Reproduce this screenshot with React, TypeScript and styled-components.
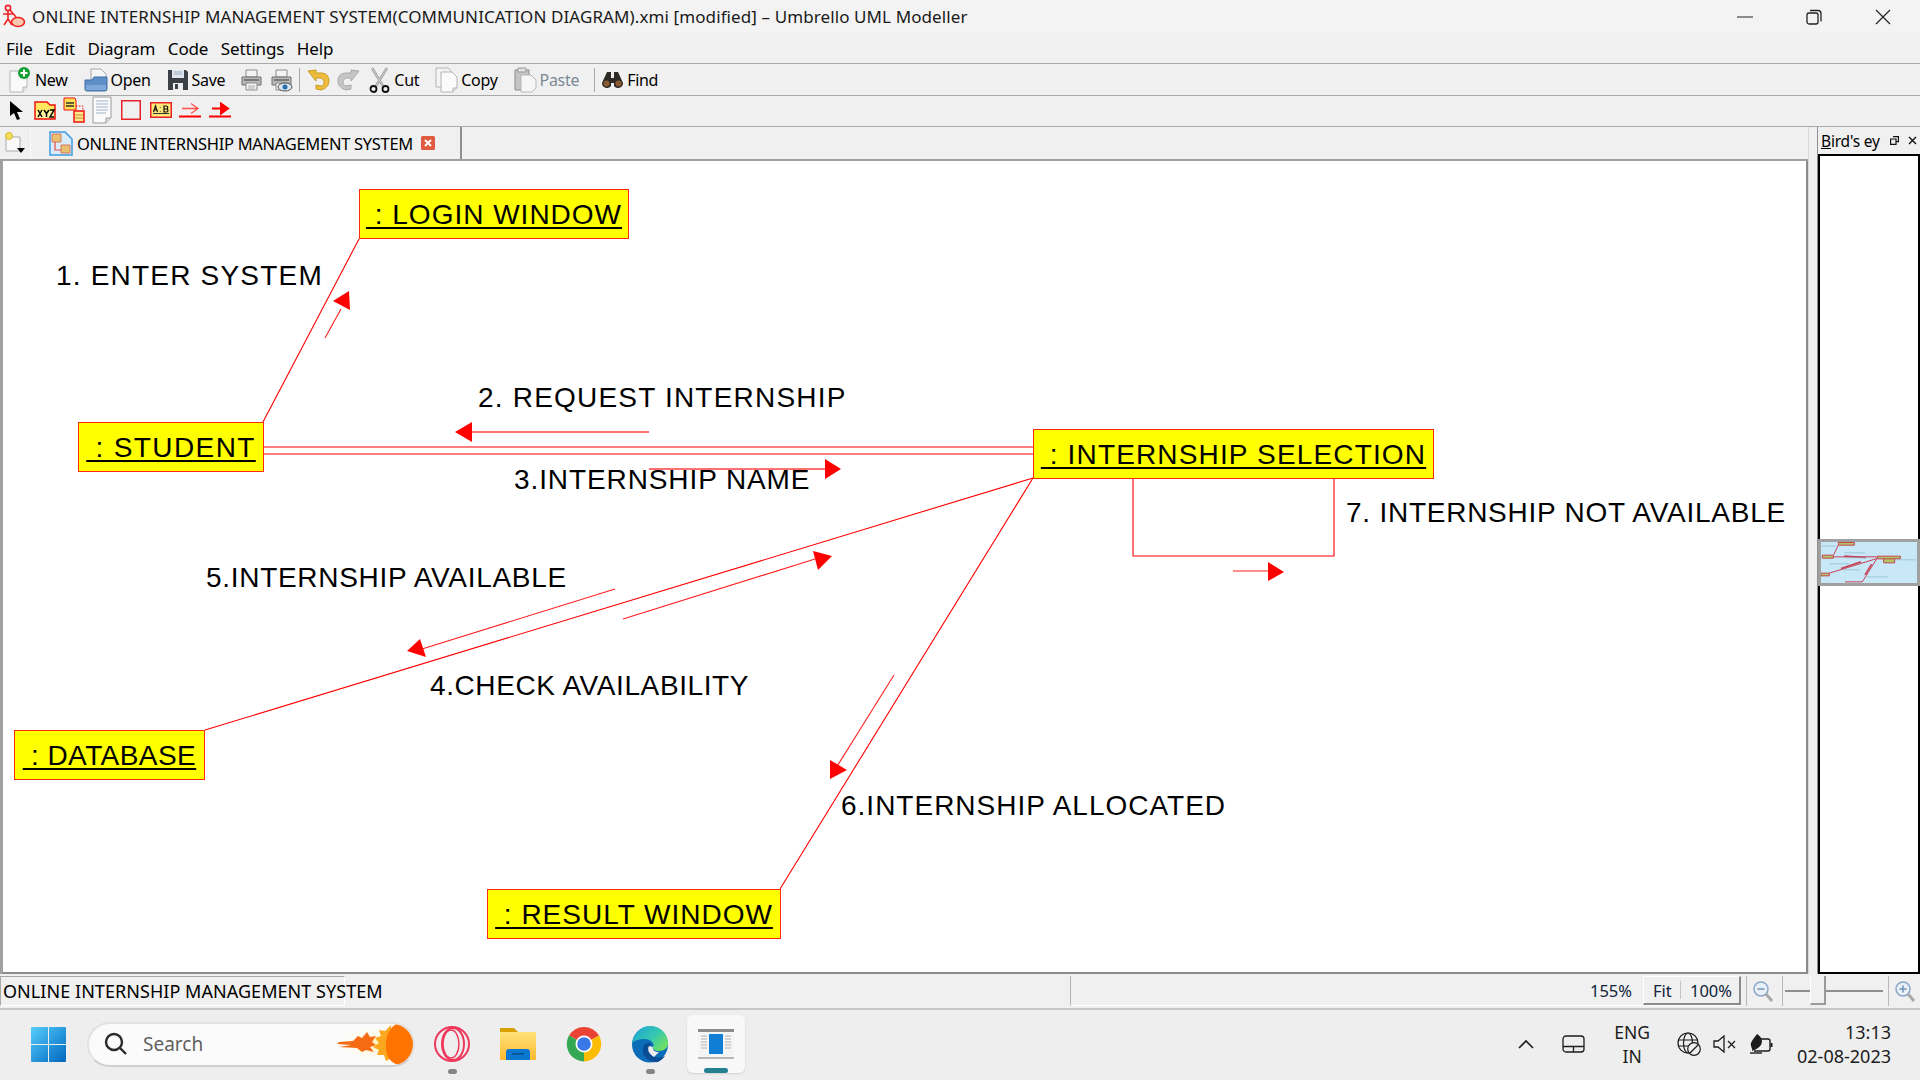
import React from 'react';
import styled, { createGlobalStyle } from 'styled-components';

const GlobalStyle = createGlobalStyle`
  html, body { margin: 0; padding: 0; background: #f0f0f0; }
  body { font-family: "Noto Sans", "Open Sans", sans-serif; color: #000; overflow: hidden; }
`;

const Page = styled.div`
  width: 1920px;
  height: 1080px;
  display: flex;
  flex-direction: column;
  overflow: hidden;
`;

const TitleBar = styled.div`
  height: 33px;
  display: flex;
  align-items: center;
  background: #f3f3f3;
  padding-left: 2px;
`;

const TitleText = styled.span`
  margin-left: 6px;
  font-size: 17px;
  letter-spacing: 0.1px;
  color: #1a1a1a;
  white-space: nowrap;
`;

const WindowControls = styled.div`
  margin-left: auto;
  display: flex;
  padding-right: 3px;
`;

const WindowButton = styled.div`
  width: 69px;
  height: 33px;
  display: flex;
  align-items: center;
  justify-content: center;
`;

const MenuBar = styled.div`
  height: 30px;
  display: flex;
  align-items: center;
  gap: 12.5px;
  padding-left: 6px;
  background: #f0f0f0;
  border-bottom: 1px solid #a9a9a9;
  font-size: 17px;
  letter-spacing: -0.15px;
`;

const ToolRow = styled.div`
  height: 31px;
  display: flex;
  align-items: center;
  background: #f0f0f0;
  border-bottom: 1px solid #a9a9a9;
  font-size: 16px;
  letter-spacing: -0.3px;
`;

const ToolButton = styled.div<{ $disabled?: boolean; $tight?: boolean }>`
  display: flex;
  align-items: center;
  gap: 3px;
  padding: 0 8px 0 ${p => (p.$tight ? 5 : 8)}px;
  color: ${p => (p.$disabled ? '#7d8a96' : '#000')};
`;

const IconButton = styled.div<{ $left?: number; $right?: number }>`
  display: flex;
  align-items: center;
  padding: 0 ${p => p.$right ?? 3.5}px 0 ${p => p.$left ?? 3.5}px;
`;

const ToolSeparator = styled.div<{ $left: number; $right: number }>`
  width: 1px;
  height: 24px;
  margin: 0 ${p => p.$right}px 0 ${p => p.$left}px;
  background: #a9a9a9;
`;

const PaletteRow = styled.div`
  height: 31px;
  box-sizing: border-box;
  display: flex;
  align-items: center;
  gap: 7px;
  padding: 0 0 2px 9px;
  background: #f0f0f0;
  border-bottom: 1px solid #a9a9a9;
`;

const Workspace = styled.div`
  height: 847px;
  display: flex;
`;

const MainColumn = styled.div`
  width: 1808px;
  flex-shrink: 0;
  display: flex;
  flex-direction: column;
`;

const TabRow = styled.div`
  height: 32px;
  display: flex;
  align-items: stretch;
  background: #f0f0f0;
`;

const CornerButton = styled.div`
  width: 31px;
  display: flex;
  align-items: center;
  justify-content: center;
  border-right: 1px solid #fafafa;
  box-sizing: border-box;
`;

const Tab = styled.div`
  width: 431px;
  box-sizing: border-box;
  display: flex;
  align-items: center;
  padding-left: 18px;
  border-right: 2px solid #8f8f8f;
  font-size: 16.5px;
  letter-spacing: -0.3px;
  white-space: nowrap;
`;

const TabLabel = styled.span`
  margin: 0 8px 0 4px;
`;

const Canvas = styled.div`
  position: relative;
  flex: 1;
  background: #fff;
  overflow: hidden;
  box-shadow: inset 3px 2px 0 #a0a0a0, inset -2px -2px 0 #8a8a8a;
`;

const DiagramSvg = styled.svg`
  position: absolute;
  left: 0;
  top: 0;
`;

const ObjectBox = styled.div<{ $x: number; $y: number; $w: number; $spacing: number }>`
  position: absolute;
  left: ${p => p.$x}px;
  top: ${p => p.$y - 160}px;
  width: ${p => p.$w}px;
  height: 50px;
  box-sizing: border-box;
  display: flex;
  align-items: center;
  justify-content: center;
  padding-top: 1px;
  background: #ffff00;
  border: 1px solid #ff2a10;
  font-family: "Liberation Sans", Arial, sans-serif;
  font-size: 28px;
  letter-spacing: ${p => p.$spacing}px;
  color: #000;
  text-decoration: underline;
  text-decoration-thickness: 2px;
  text-underline-offset: 3px;
  white-space: pre;
`;

const MessageLabel = styled.div<{ $x: number; $y: number; $spacing: number }>`
  position: absolute;
  left: ${p => p.$x}px;
  top: ${p => p.$y - 160}px;
  font-family: "Liberation Sans", Arial, sans-serif;
  font-size: 28px;
  line-height: 32px;
  letter-spacing: ${p => p.$spacing}px;
  color: #000;
  white-space: pre;
`;

const Dock = styled.div`
  flex: 1;
  min-width: 0;
  display: flex;
  flex-direction: column;
  padding-left: 9px;
  box-sizing: border-box;
  background: #f0f0f0;
  border-left: 1px solid #d8d8d8;
  box-shadow: inset 8px 0 0 #f0f0f0, inset 9px 0 0 #8f8f8f;
`;

const DockHeader = styled.div`
  height: 27px;
  display: flex;
  align-items: center;
  padding-left: 3px;
  font-size: 15.5px;
  letter-spacing: -0.2px;
`;

const DockTitle = styled.span`
  width: 69px;
  white-space: nowrap;
`;

const Accel = styled.span`
  text-decoration: underline;
`;

const DockIcons = styled.div`
  display: flex;
  align-items: center;
  gap: 9px;
`;

const DockBody = styled.div`
  flex: 1;
  background: #fff;
  border: 2px solid #000;
  padding-top: 383px;
`;

const MiniMap = styled.div`
  height: 47px;
  box-sizing: border-box;
  margin: 0 -2px;
  background: #c8e8f8;
  border: 3px solid #a0a0a0;
`;

const StatusBar = styled.div`
  height: 36px;
  box-sizing: border-box;
  display: flex;
  align-items: center;
  padding: 2px 0;
  background: #f0f0f0;
  border-bottom: 2px solid #c6c6c6;
  font-size: 16.5px;
`;

const StatusMessage = styled.div`
  width: 345px;
  height: 100%;
  box-sizing: border-box;
  display: flex;
  align-items: center;
  padding-left: 2px;
  border: 1px solid #fff;
  border-top-color: #a8a8a8;
  border-left-color: #a8a8a8;
  font-size: 18px;
  letter-spacing: 0.05px;
  white-space: nowrap;
`;

const StatusFill = styled.div`
  margin-left: 725px;
  width: 671px;
  height: 100%;
  box-sizing: border-box;
  display: flex;
  align-items: center;
  justify-content: flex-end;
  border-left: 1px solid #b0b0b0;
  border-bottom: 1px solid #fff;
  color: #10233a;
`;

const FitGroup = styled.div`
  height: 100%;
  width: 98px;
  box-sizing: border-box;
  display: flex;
  align-items: center;
  justify-content: space-between;
  padding: 0 7px 0 9px;
  border-right: 2px solid #8a8a8a;
  border-bottom: 2px solid #8a8a8a;
  border-left: 1px solid #fff;
  border-top: 1px solid #fff;
  background: #f0f0f0;
`;

const FitDivider = styled.span`
  width: 1px;
  height: 18px;
  background: #c4c4c4;
`;

const FitSlot = styled.div`
  height: 100%;
  margin-left: 11px;
`;

const ZoomTile = styled.div<{ $gap: number; $w: number }>`
  width: ${p => p.$w}px;
  margin-left: ${p => p.$gap}px;
  height: 100%;
  box-sizing: border-box;
  display: flex;
  align-items: center;
  justify-content: center;
  border-left: 1px solid #b8b8b8;
`;

const SliderTrack = styled.div`
  position: relative;
  width: 98px;
  height: 2px;
  background: #8f8f8f;
`;

const SliderHandle = styled.div`
  position: absolute;
  left: 25px;
  top: -14px;
  width: 16px;
  height: 29px;
  box-sizing: border-box;
  background: #f0f0f0;
  border-left: 1px solid #fff;
  border-right: 2px solid #9a9a9a;
  border-bottom: 2px solid #9a9a9a;
`;

const Taskbar = styled.div`
  flex: 1;
  display: flex;
  align-items: center;
  padding: 0 29px 2px 31px;
  background: #eeeeee;
`;

const SearchPill = styled.div`
  position: relative;
  width: 328px;
  height: 45px;
  margin-left: 21px;
  box-sizing: border-box;
  display: flex;
  align-items: center;
  gap: 16px;
  padding-left: 15px;
  background: #fbfbfb;
  border: 2px solid #e2e2e2;
  border-bottom-color: #cfcfcf;
  border-radius: 23px;
  overflow: hidden;
  font-size: 19px;
  color: #5f5f5f;
`;

const Fireball = styled.svg`
  position: absolute;
  right: 0;
  top: -2px;
`;

const TaskIcon = styled.div<{ $gap: number }>`
  position: relative;
  width: 36px;
  height: 36px;
  margin-left: ${p => p.$gap}px;
  display: flex;
  align-items: center;
  justify-content: center;
`;

const RunningDot = styled.div`
  position: absolute;
  left: 14px;
  top: 43px;
  width: 9px;
  height: 5px;
  border-radius: 3px;
  background: #858585;
`;

const ActiveTile = styled.div`
  position: relative;
  width: 58px;
  height: 58px;
  margin-left: 19px;
  display: flex;
  align-items: center;
  justify-content: center;
  background: #f8f8f8;
  border-radius: 6px;
  box-shadow: 0 1px 2px rgba(0, 0, 0, 0.12);
`;

const ActiveBar = styled.div`
  position: absolute;
  left: 17px;
  bottom: 0;
  width: 24px;
  height: 5px;
  border-radius: 3px;
  background: #23808f;
`;

const Tray = styled.div`
  margin-left: auto;
  display: flex;
  align-items: center;
  color: #1c1c1c;
`;

const TrayIcon = styled.div<{ $gap: number }>`
  display: flex;
  margin-left: ${p => p.$gap}px;
`;

const TrayText = styled.div<{ $gap: number; $align: string; $size: number }>`
  margin-left: ${p => p.$gap}px;
  font-size: ${p => p.$size}px;
  line-height: 24px;
  text-align: ${p => p.$align};
  white-space: nowrap;
`;

/* ---------- diagram data, page coordinates ---------- */

const objects = [
  { name: ' : LOGIN WINDOW', x: 359, y: 190, w: 270, spacing: 1 },
  { name: ' : STUDENT', x: 78, y: 423, w: 186, spacing: 1.4 },
  { name: ' : INTERNSHIP SELECTION', x: 1033, y: 430, w: 401, spacing: 1.15 },
  { name: ' : DATABASE', x: 14, y: 731, w: 191, spacing: 0.45 },
  { name: ' : RESULT WINDOW', x: 487, y: 890, w: 294, spacing: 1 },
];

const messages = [
  { text: '1. ENTER SYSTEM', x: 56, y: 261, spacing: 1.2 },
  { text: '2. REQUEST INTERNSHIP', x: 478, y: 383, spacing: 1.2 },
  { text: '3.INTERNSHIP NAME', x: 514, y: 465, spacing: 0.9 },
  { text: '5.INTERNSHIP AVAILABLE', x: 206, y: 563, spacing: 0.7 },
  { text: '4.CHECK AVAILABILITY', x: 430, y: 671, spacing: 0.6 },
  { text: '6.INTERNSHIP ALLOCATED', x: 841, y: 791, spacing: 1 },
  { text: '7. INTERNSHIP NOT AVAILABLE', x: 1346, y: 498, spacing: 0.75 },
];

const links = [
  '359,240 263,423',
  '263,448 1033,448',
  '263,455 1033,455',
  '205,731 1033,479',
  '780,890 1033,479',
  '1133,479 1133,557 1334,557 1334,479',
];

const flows = [
  { line: '325,339 341,310', head: '349,292 333,302 350,311' },
  { line: '649,433 470,433', head: '455,433 472,423 472,443', wide: true },
  { line: '649,470 826,470', head: '825,460 825,480 841,470', wide: true },
  { line: '615,590 422,650', head: '407,652 420,640 426,658' },
  { line: '623,620 815,560', head: '813,552 832,557 818,571' },
  { line: '894,676 836,769', head: '830,761 830,780 847,771' },
  { line: '1233,572 1269,572', head: '1268,563 1268,582 1284,573' },
];

/* ---------- small drawings ---------- */

const AppLogo = () => (
  <svg width="24" height="26" viewBox="0 0 24 26" fill="none" stroke="#e22" strokeWidth="1.6">
    <circle cx="6" cy="4" r="2.6" />
    <path d="M6 7v8M1 10h10M6 15l-4 6M6 15l4 6M8 6l6 7" />
    <ellipse cx="16" cy="18" rx="6.5" ry="4.5" fill="#fbc8b0" />
  </svg>
);

const PageIcon = ({ plus }: { plus?: boolean }) => (
  <svg width="24" height="26" viewBox="0 0 24 26">
    <path d="M2 4h12l5 5v11l-4 5H2z" fill="#fafafa" stroke="#b4b4b4" />
    <path d="M15 25v-5h4" fill="#e6e6e6" stroke="#b4b4b4" />
    {plus && <circle cx="16" cy="6" r="6" fill="#12a030" />}
    {plus && <path d="M16 2.5v7M12.500 6h7" stroke="#fff" strokeWidth="2" />}
  </svg>
);

const OpenIcon = () => (
  <svg width="24" height="26" viewBox="0 0 24 26">
    <path d="M7 2h10l5 5v9H7z" fill="#f6f6f6" stroke="#a8a8a8" />
    <path d="M1 13h7l2-3h13v12a2 2 0 0 1-2 2H2.500a2 2 0 0 1-1.500-2z" fill="#5e8fc8" stroke="#3f6ea6" />
    <path d="M2 18h20v5H2z" fill="#7fa8d8" />
  </svg>
);

const SaveIcon = () => (
  <svg width="22" height="24" viewBox="0 0 22 24">
    <path d="M1 2h18l2 2v18H1z" fill="#3b4046" />
    <path d="M5 2h12v8H5z" fill="#dfe6ee" />
    <path d="M7 4h8M7 6h8" stroke="#9fb0c2" />
    <path d="M6 15h10v7H6z" fill="#eceef0" />
    <path d="M8 16h3v5H8z" fill="#3b4046" />
  </svg>
);

const PrintIcon = ({ eye }: { eye?: boolean }) => (
  <svg width="23" height="24" viewBox="0 0 23 24">
    <path d="M6 2h11v7H6z" fill="#f4f4f4" stroke="#8a8a8a" />
    <path d="M2 9h19v8H2z" fill="#b8b8b8" stroke="#707070" />
    <path d="M4 12h15" stroke="#666" strokeWidth="1.500" />
    <path d="M6 15h11v7H6z" fill="#f4f4f4" stroke="#8a8a8a" />
    <path d="M8 18h7M8 20h7" stroke="#aaa" />
    {eye && <ellipse cx="15" cy="19" rx="7" ry="4" fill="#d8e8f4" stroke="#555" />}
    {eye && <circle cx="15" cy="19" r="2.500" fill="#2a6ea8" />}
  </svg>
);

const ArrowBackIcon = ({ mirrored, fill, edge }: { mirrored?: boolean; fill: string; edge: string }) => (
  <svg width="23" height="22" viewBox="0 0 23 22">
    <g transform={mirrored ? 'translate(23 0) scale(-1 1)' : undefined}>
      <path d="M1 2l8-1v3h5c5 0 8 3 8 8 0 5-4 8-8 9l-5-1v-4l5 1c2 0 3-2 3-4s-2-4-4-4H9v3z" fill={fill} stroke={edge} />
    </g>
  </svg>
);

const ScissorsIcon = () => (
  <svg width="23" height="26" viewBox="0 0 23 26" fill="none">
    <path d="M4 1l11 18M19 1L8 19" stroke="#9a9a9a" strokeWidth="2.400" />
    <path d="M4 1l11 18M19 1L8 19" stroke="#e4e4e4" strokeWidth="0.800" />
    <circle cx="5.500" cy="22" r="3" stroke="#111" strokeWidth="1.800" />
    <circle cx="17.500" cy="22" r="3" stroke="#111" strokeWidth="1.800" />
  </svg>
);

const CopyIcon = () => (
  <svg width="23" height="26" viewBox="0 0 23 26">
    <path d="M1 1h12l3 3v16H1z" fill="#f4f4f4" stroke="#b4b4b4" />
    <path d="M6 5h11l5 5v11l-4 4H6z" fill="#fbfbfb" stroke="#b4b4b4" />
    <path d="M18 25v-4h4" fill="#e4e4e4" stroke="#b4b4b4" />
  </svg>
);

const PasteIcon = () => (
  <svg width="23" height="26" viewBox="0 0 23 26">
    <path d="M1 3h14v20H1z" fill="#c4c4c4" stroke="#8c8c8c" />
    <path d="M4 1h8v4H4z" fill="#e2e2e2" stroke="#9a9a9a" />
    <path d="M7 8h10l5 5v8l-4 4H7z" fill="#f6f6f6" stroke="#b8b8b8" />
  </svg>
);

const BinocularsIcon = () => (
  <svg width="23" height="18" viewBox="0 0 23 18">
    <path d="M6 1h4v6h3V1h4l5 11a5 5 0 0 1-9 3v-3h-3v3a5 5 0 0 1-9-3z" fill="#2e2a26" />
    <circle cx="5.500" cy="12.500" r="3" fill="#8a5a30" />
    <circle cx="17.500" cy="12.500" r="3" fill="#8a5a30" />
  </svg>
);

const PointerIcon = () => (
  <svg width="18" height="22" viewBox="0 0 18 22">
    <path d="M1 2v15l4-3 3 7 3-1-3-7h6z" fill="#000" />
  </svg>
);

const XyzIcon = () => (
  <svg width="22" height="22" viewBox="0 0 22 22">
    <path d="M1 3h12l3 3h5v14H1z" fill="#ffe860" stroke="#e11" strokeWidth="1.500" />
    <path d="M2 12h18v7H2z" fill="#fff6a0" />
    <path d="M4 11l4 7M8 11l-4 7M10 11l2.500 3.500v3.500M15 11l-2.500 3.500M16 11h4l-4 7h4" stroke="#000" strokeWidth="1.500" fill="none" />
  </svg>
);

const AssocIcon = () => (
  <svg width="22" height="26" viewBox="0 0 22 26">
    <path d="M1 1h11l1 3v9H1z" fill="#ffe050" stroke="#e11" />
    <path d="M3 6h8M3 9h8" stroke="#333" strokeWidth="1.500" />
    <path d="M13 9h7v6" fill="none" stroke="#e11" strokeDasharray="1.500 1.500" />
    <path d="M11 14h10v11H11z" fill="#ffe888" stroke="#e11" strokeWidth="1.500" />
    <path d="M12 18h8M12 21h8" stroke="#c84" />
  </svg>
);

const NoteIcon = () => (
  <svg width="22" height="28" viewBox="0 0 22 28">
    <path d="M1 1h18v21l-5 5H1z" fill="#fafafa" stroke="#9c9c9c" />
    <path d="M14 27v-5h5" fill="#ddd" stroke="#9c9c9c" />
    <path d="M4 5h12M4 8h12M4 11h12M4 14h12M4 17h10" stroke="#9fb4cc" />
  </svg>
);

const FrameIcon = () => (
  <svg width="22" height="20" viewBox="0 0 22 20">
    <path d="M.75.75h18.5v18.5H.75z" fill="none" stroke="#e8222a" strokeWidth="1.500" />
  </svg>
);

const AbIcon = () => (
  <svg width="22" height="16" viewBox="0 0 22 16">
    <path d="M.75.75h20.500v14.500H.75z" fill="#ffe878" stroke="#e8222a" strokeWidth="1.500" />
    <path d="M3 11.500h16" stroke="#333" />
    <path d="M3.500 10l2-6 2 6M4.300 8h2.500M10.500 5.500v.5M10.500 9v.5M14 4v6h2.500a1.500 1.500 0 0 0 0-3H14h2.200a1.500 1.500 0 0 0 0-3z" stroke="#111" strokeWidth="1.200" fill="none" />
  </svg>
);

const MessageIcon = ({ solid }: { solid?: boolean }) => (
  <svg width="23" height="16" viewBox="0 0 23 16">
    <path d="M0 14.500h22" stroke="#f00" strokeWidth="2" />
    {solid ? (
      <path d="M3 6.500h10M12 1.500l7 5-7 5z" stroke="#f00" fill="#f00" strokeWidth="2" />
    ) : (
      <path d="M3 6.500h15M12 1.500l7 5-7 5" stroke="#ff5050" fill="none" strokeWidth="1.300" />
    )}
  </svg>
);

const NewTabIcon = () => (
  <svg width="22" height="24" viewBox="0 0 22 24">
    <path d="M2 6h14v14H2z" fill="#fafafa" stroke="#a8a8a8" strokeLinejoin="round" />
    <circle cx="5" cy="5" r="3.500" fill="#f6dd5a" stroke="#d8b830" />
    <path d="M13 17h8l-4 5z" fill="#000" />
  </svg>
);

const DiagramTabIcon = () => (
  <svg width="24" height="25" viewBox="0 0 24 25">
    <path d="M1 1h15l7 7v16H1z" fill="#d8ecfa" stroke="#3d9ae0" strokeWidth="1.500" />
    <path d="M3 3h9v8H3z" fill="#e8c070" stroke="#d87860" />
    <path d="M12 14h9v8h-9z" fill="#e8c070" stroke="#d87860" />
    <path d="M6 11v8h6" fill="none" stroke="#e84a4a" strokeWidth="1.200" />
  </svg>
);

const TabCloseIcon = () => (
  <svg width="14" height="14" viewBox="0 0 14 14">
    <rect width="14" height="14" rx="1.500" fill="#df5a3e" />
    <path d="M4 4l6 6M10 4l-6 6" stroke="#fff" strokeWidth="2" />
  </svg>
);

const ZoomGlass = ({ plus }: { plus?: boolean }) => (
  <svg width="22" height="23" viewBox="0 0 22 23" fill="none">
    <circle cx="9" cy="9" r="7" fill="#e8eff7" stroke="#8ba6c6" strokeWidth="1.500" />
    <path d="M5.500 9h7" stroke="#6f92ba" strokeWidth="1.500" />
    {plus && <path d="M9 5.500v7" stroke="#6f92ba" strokeWidth="1.500" />}
    <path d="M14 14l6 7" stroke="#a8a8a8" strokeWidth="3" />
  </svg>
);

const WindowsLogo = () => (
  <svg width="35" height="35" viewBox="0 0 35 35">
    <defs>
      <linearGradient id="winTile" x1="0" y1="0" x2="1" y2="1">
        <stop offset="0" stopColor="#55cdfb" />
        <stop offset="1" stopColor="#0067c0" />
      </linearGradient>
    </defs>
    <path d="M1 0h16v17H0V1a1 1 0 0 1 1-1zM18 0h16a1 1 0 0 1 1 1v16H18zM0 18h17v17H1a1 1 0 0 1-1-1zM18 18h17v16a1 1 0 0 1-1 1H18z" fill="url(#winTile)" />
  </svg>
);

const SearchGlass = () => (
  <svg width="23" height="24" viewBox="0 0 23 24" fill="none" stroke="#2a2a2a" strokeWidth="2.400">
    <circle cx="10" cy="10" r="8" />
    <path d="M16 16l6 6" />
  </svg>
);

const OperaIcon = () => (
  <svg width="36" height="36" viewBox="0 0 36 36" fill="none" stroke="#f0375c" strokeWidth="2">
    <circle cx="18" cy="18" r="17" />
    <ellipse cx="19" cy="18" rx="11" ry="16" />
    <ellipse cx="17" cy="18" rx="8" ry="14" strokeWidth="1.500" />
  </svg>
);

const FolderIcon = () => (
  <svg width="36" height="36" viewBox="0 0 36 36">
    <defs>
      <linearGradient id="folderBody" x1="0" y1="0" x2="0" y2="1">
        <stop offset="0" stopColor="#ffe27a" />
        <stop offset="1" stopColor="#fdb92e" />
      </linearGradient>
    </defs>
    <path d="M0 2h14l4 4H0z" fill="#d9a000" />
    <path d="M0 6h36v28H0z" fill="url(#folderBody)" />
    <path d="M6 34V26a3 3 0 0 1 3-3h18a3 3 0 0 1 3 3v8z" fill="#0a78d0" />
    <path d="M12 28h12" stroke="#074a8c" strokeWidth="1.500" />
  </svg>
);

const ChromeIcon = () => (
  <svg width="36" height="36" viewBox="0 0 36 36">
    <path d="M18 18L3 9.500A17.500 17.500 0 0 1 33 9.500z" fill="#ea4335" />
    <path d="M18 18L3 9.500A17.500 17.500 0 0 0 18 35.500z" fill="#34a853" />
    <path d="M18 18L33 9.500A17.500 17.500 0 0 1 18 35.500z" fill="#fbbc04" />
    <circle cx="18" cy="18" r="8.500" fill="#fff" />
    <circle cx="18" cy="18" r="6.800" fill="#3b78e7" />
  </svg>
);

const EdgeIcon = () => (
  <svg width="36" height="37" viewBox="0 0 36 37">
    <defs>
      <linearGradient id="edgeTop" x1="0" y1="0" x2="1" y2="0.700">
        <stop offset="0" stopColor="#1aa0d8" />
        <stop offset="0.600" stopColor="#36c8b0" />
        <stop offset="1" stopColor="#70e060" />
      </linearGradient>
    </defs>
    <circle cx="18" cy="18.500" r="18" fill="#0c6cb8" />
    <path d="M0 17C2 6 10 0 18 0c11 0 18 8 18 17 0 5-4 8-9 8-4 0-7-2-6-4 2-3-2-8-8-8-6 0-11 2-13 4z" fill="url(#edgeTop)" />
    <path d="M19 17c-5-1-9 3-8 9 1 6 8 11 15 10 2-1 5-3 7-6-4 2-11 2-13-1-3-3-2-8-1-12z" fill="#0b4d94" />
    <path d="M21 21c-1 3 2 5 6 5l-5 5c-5-3-7-7-5-11z" fill="#eeeeee" />
  </svg>
);

const PreviewAppIcon = () => (
  <svg width="36" height="30" viewBox="0 0 36 30">
    <path d="M0 0h36v30H0z" fill="#f4f4f4" />
    <path d="M0 0h36v3H0z" fill="#8c8c8c" />
    <path d="M0 28h36v2H0z" fill="#b8b8b8" />
    <path d="M11 5h14v20H11z" fill="#0f7ed4" />
    <path d="M3 7h6M3 10h6M3 13h6M3 16h6M3 19h6M27 7h6M27 10h6M27 13h6M27 16h6M27 19h6" stroke="#c8c8c8" strokeWidth="1.500" />
  </svg>
);

const Chevron = () => (
  <svg width="16" height="10" viewBox="0 0 16 10" fill="none" stroke="#1c1c1c" strokeWidth="1.600">
    <path d="M1 9l7-7 7 7" />
  </svg>
);

const TouchpadIcon = () => (
  <svg width="23" height="18" viewBox="0 0 23 18" fill="none" stroke="#1c1c1c" strokeWidth="1.300">
    <rect x="1" y="1" width="21" height="16" rx="3" />
    <path d="M1 11.500h21M11.500 11.500V17" />
  </svg>
);

const GlobeOffIcon = () => (
  <svg width="24" height="24" viewBox="0 0 24 24" fill="none" stroke="#1c1c1c" strokeWidth="1.200">
    <circle cx="11" cy="11" r="10" />
    <ellipse cx="11" cy="11" rx="4.500" ry="10" />
    <path d="M1 8h20M1 14h20" />
    <circle cx="17" cy="17" r="6.300" fill="#eeeeee" />
    <path d="M13 21l8-8" />
  </svg>
);

const MuteIcon = () => (
  <svg width="23" height="18" viewBox="0 0 23 18" fill="none" stroke="#1c1c1c" strokeWidth="1.300">
    <path d="M1 6v6h4l6 5V1L5 6z" />
    <path d="M15 6l7 7M22 6l-7 7" />
  </svg>
);

const BatteryLeafIcon = () => (
  <svg width="24" height="22" viewBox="0 0 24 22">
    <path d="M9 6h10a2 2 0 0 1 2 2v8a2 2 0 0 1-2 2H5" fill="none" stroke="#1c1c1c" strokeWidth="1.400" />
    <path d="M21.500 10h2v4h-2z" fill="#1c1c1c" />
    <path d="M8 1c5 3 6 7 4 11-2 3-6 5-9 6 1-2-2-5-1-8 1-3 4-6 6-9z" fill="#1c1c1c" />
    <path d="M1 20h12" stroke="#1c1c1c" strokeWidth="1.400" />
  </svg>
);

const App: React.FC = () => {
  return (
    <Page>
      <GlobalStyle />
      <TitleBar>
        <AppLogo />
        <TitleText>ONLINE INTERNSHIP MANAGEMENT SYSTEM(COMMUNICATION DIAGRAM).xmi [modified] – Umbrello UML Modeller</TitleText>
        <WindowControls>
          <WindowButton>
            <svg width="16" height="2" viewBox="0 0 16 2"><path d="M0 1h16" stroke="#222" strokeWidth="1" /></svg>
          </WindowButton>
          <WindowButton>
            <svg width="16" height="16" viewBox="0 0 16 16" fill="none" stroke="#222" strokeWidth="1.300">
              <rect x="1" y="4" width="11" height="11" rx="2" />
              <path d="M4 1.500h8a3 3 0 0 1 3 3v8" />
            </svg>
          </WindowButton>
          <WindowButton>
            <svg width="16" height="16" viewBox="0 0 16 16" stroke="#222" strokeWidth="1.200"><path d="M1 1l14 14M15 1L1 15" /></svg>
          </WindowButton>
        </WindowControls>
      </TitleBar>

      <MenuBar>
        {['File', 'Edit', 'Diagram', 'Code', 'Settings', 'Help'].map(item => (
          <span key={item}>{item}</span>
        ))}
      </MenuBar>

      <ToolRow>
        <ToolButton><PageIcon plus />New</ToolButton>
        <ToolButton><OpenIcon />Open</ToolButton>
        <ToolButton><SaveIcon />Save</ToolButton>
        <IconButton $left={7}><PrintIcon /></IconButton>
        <IconButton><PrintIcon eye /></IconButton>
        <ToolSeparator $left={2} $right={4} />
        <IconButton><ArrowBackIcon fill="#eebc3c" edge="#c89a20" /></IconButton>
        <IconButton $right={0}><ArrowBackIcon mirrored fill="#c6c6c6" edge="#a8a8a8" /></IconButton>
        <ToolButton><ScissorsIcon />Cut</ToolButton>
        <ToolButton><CopyIcon />Copy</ToolButton>
        <ToolButton $disabled><PasteIcon />Paste</ToolButton>
        <ToolSeparator $left={7} $right={1} />
        <ToolButton $tight><BinocularsIcon />Find</ToolButton>
      </ToolRow>

      <PaletteRow>
        <PointerIcon />
        <XyzIcon />
        <AssocIcon />
        <NoteIcon />
        <FrameIcon />
        <AbIcon />
        <MessageIcon />
        <MessageIcon solid />
      </PaletteRow>

      <Workspace>
        <MainColumn>
          <TabRow>
            <CornerButton><NewTabIcon /></CornerButton>
            <Tab>
              <DiagramTabIcon />
              <TabLabel>ONLINE INTERNSHIP MANAGEMENT SYSTEM</TabLabel>
              <TabCloseIcon />
            </Tab>
          </TabRow>
          <Canvas>
            <DiagramSvg width="1808" height="815" viewBox="0 160 1808 815" fill="none">
              {links.map(points => (
                <polyline key={points} points={points} stroke="#ff0000" strokeWidth="1.100" />
              ))}
              {flows.map(flow => (
                <g key={flow.line}>
                  <polyline points={flow.line} stroke={flow.wide ? '#ff7070' : '#ff2020'} strokeWidth={flow.wide ? 2 : 1.100} />
                  <polygon points={flow.head} fill="#ff0000" />
                </g>
              ))}
            </DiagramSvg>
            {objects.map(box => (
              <ObjectBox key={box.name} $x={box.x} $y={box.y} $w={box.w} $spacing={box.spacing}>{box.name}</ObjectBox>
            ))}
            {messages.map(label => (
              <MessageLabel key={label.text} $x={label.x} $y={label.y} $spacing={label.spacing}>{label.text}</MessageLabel>
            ))}
          </Canvas>
        </MainColumn>
        <Dock>
          <DockHeader>
            <DockTitle><Accel>B</Accel>ird's ey</DockTitle>
            <DockIcons>
              <svg width="9" height="9" viewBox="0 0 9 9" fill="none" stroke="#111" strokeWidth="1.200">
                <path d="M3 .6h5.400v5H6.500M.6 3h5.400v5.400H.6z" />
              </svg>
              <svg width="9" height="9" viewBox="0 0 9 9" stroke="#111" strokeWidth="1.400"><path d="M1 1l7 7M8 1L1 8" /></svg>
            </DockIcons>
          </DockHeader>
          <DockBody>
            <MiniMap>
              <svg width="97" height="41" viewBox="120 129 291 120" fill="none" stroke="#c84058" strokeWidth="3">
                <path d="M124 167h33v9h-33zM172 129h48v8h-48zM290 170h68v8h-68zM308 178v12h33v-12M120 221h25v8h-25z" fill="#b0c860" />
                <path d="M158 166l14-29M157 172h133M145 221l143-44M192 247h52l44-70" />
                <path d="M180 207l60-20M190 170l65 4M252 226l20-32" strokeWidth="5" />
                <path d="M122 140h44M190 160h62M196 175h60M145 193h60M186 211h52M350 181h55M258 232h62" stroke="#88b8c8" strokeWidth="2" />
              </svg>
            </MiniMap>
          </DockBody>
        </Dock>
      </Workspace>

      <StatusBar>
        <StatusMessage>ONLINE INTERNSHIP MANAGEMENT SYSTEM</StatusMessage>
        <StatusFill>
          155%
          <FitSlot>
            <FitGroup>Fit<FitDivider />100%</FitGroup>
          </FitSlot>
        </StatusFill>
        <ZoomTile $gap={5} $w={32}><ZoomGlass /></ZoomTile>
        <ZoomTile $gap={4} $w={103}>
          <SliderTrack><SliderHandle /></SliderTrack>
        </ZoomTile>
        <ZoomTile $gap={3} $w={32}><ZoomGlass plus /></ZoomTile>
      </StatusBar>

      <Taskbar>
        <WindowsLogo />
        <SearchPill>
          <SearchGlass />
          Search
          <Fireball width="80" height="45" viewBox="0 0 80 45">
            <defs>
              <radialGradient id="fireGlow" cx="0.600" cy="0.500" r="0.600">
                <stop offset="0" stopColor="#fff2b0" />
                <stop offset="1" stopColor="#fbfbfb" stopOpacity="0" />
              </radialGradient>
            </defs>
            <ellipse cx="36" cy="22" rx="36" ry="16" fill="url(#fireGlow)" />
            <path d="M6 20l14-1 5-5 4 2 5-6 3 5 6-1-4 6 4 3-6 2 4 5-8-2-4 2-5-4-18-1 12-2-14-1z" fill="#f56a12" />
            <path d="M58 3l-6 6-6-1 2 6-6 2 4 5-6 4 6 3-2 5 7 0 2 6 6-3z" fill="#fba81e" />
            <path d="M66 1a22 22 0 0 1 0 42c-10-2-14-12-13-21 0-9 5-19 13-21z" fill="#ff7400" />
          </Fireball>
        </SearchPill>
        <TaskIcon $gap={19}><OperaIcon /><RunningDot /></TaskIcon>
        <TaskIcon $gap={30}><FolderIcon /></TaskIcon>
        <TaskIcon $gap={30}><ChromeIcon /></TaskIcon>
        <TaskIcon $gap={30}><EdgeIcon /><RunningDot /></TaskIcon>
        <ActiveTile><PreviewAppIcon /><ActiveBar /></ActiveTile>
        <Tray>
          <Chevron />
          <TrayIcon $gap={28}><TouchpadIcon /></TrayIcon>
          <TrayText $gap={29} $align="center" $size={17.5}>ENG<br />IN</TrayText>
          <TrayIcon $gap={27}><GlobeOffIcon /></TrayIcon>
          <TrayIcon $gap={12}><MuteIcon /></TrayIcon>
          <TrayIcon $gap={13}><BatteryLeafIcon /></TrayIcon>
          <TrayText $gap={24} $align="right" $size={18}>13:13<br />02-08-2023</TrayText>
        </Tray>
      </Taskbar>
    </Page>
  );
};

export default App;
